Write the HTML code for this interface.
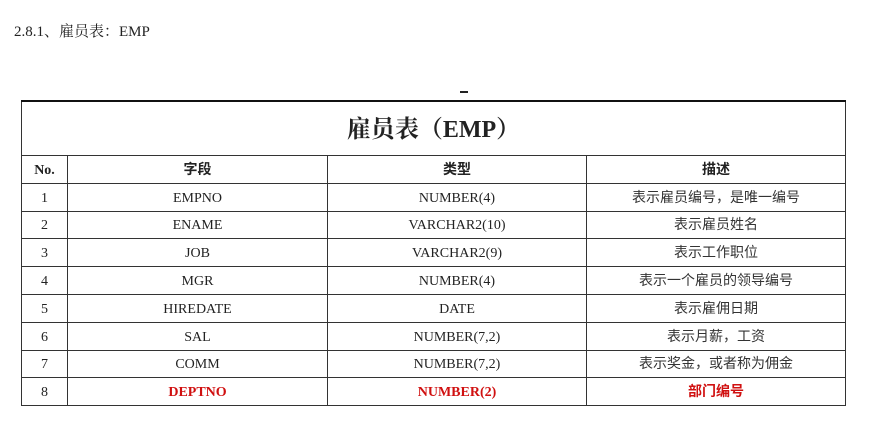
<!DOCTYPE html>
<html><head><meta charset="utf-8"><style>
body{margin:0;width:884px;height:436px;background:#fff;position:relative;overflow:hidden;font-family:"Liberation Serif","Noto Serif CJK SC",serif;color:#222}
.h{position:absolute;left:14px;top:23px;font-size:15px;line-height:18px}
.dash{position:absolute;left:460px;top:91px;width:8px;height:2px;background:#222}
table{position:absolute;left:21px;top:100px;width:824px;border-collapse:collapse;table-layout:fixed}
td{border:1px solid #333;text-align:center;font-size:14px;height:23.8px;padding:3px 0 0 0;line-height:14px;vertical-align:middle}
.t td{height:50px;font-size:24px;line-height:24px;border-top:2px solid #111;font-weight:bold;font-family:"Liberation Serif","Noto Serif CJK SC",serif}
.hd td{font-weight:bold;font-family:"Liberation Serif","Noto Sans CJK SC",serif}
.r td{color:#d01010;font-weight:bold;font-family:"Liberation Serif","Noto Sans CJK SC",serif}
td.c{font-family:"Liberation Serif","Noto Sans CJK SC",sans-serif;color:#333}
</style></head><body>
<div class="h">2.8.1、雇员表：EMP</div>
<div class="dash"></div>
<table>
<col style="width:46px"><col style="width:260px"><col style="width:259px"><col style="width:259px">
<tr class="t"><td colspan="4">雇员表（EMP）</td></tr>
<tr class="hd"><td>No.</td><td>字段</td><td>类型</td><td>描述</td></tr>
<tr><td>1</td><td>EMPNO</td><td>NUMBER(4)</td><td class="c">表示雇员编号，是唯一编号</td></tr>
<tr><td>2</td><td>ENAME</td><td>VARCHAR2(10)</td><td class="c">表示雇员姓名</td></tr>
<tr><td>3</td><td>JOB</td><td>VARCHAR2(9)</td><td class="c">表示工作职位</td></tr>
<tr><td>4</td><td>MGR</td><td>NUMBER(4)</td><td class="c">表示一个雇员的领导编号</td></tr>
<tr><td>5</td><td>HIREDATE</td><td>DATE</td><td class="c">表示雇佣日期</td></tr>
<tr><td>6</td><td>SAL</td><td>NUMBER(7,2)</td><td class="c">表示月薪，工资</td></tr>
<tr><td>7</td><td>COMM</td><td>NUMBER(7,2)</td><td class="c">表示奖金，或者称为佣金</td></tr>
<tr class="r"><td style="color:#222;font-weight:normal">8</td><td>DEPTNO</td><td>NUMBER(2)</td><td>部门编号</td></tr>
</table>
</body></html>
